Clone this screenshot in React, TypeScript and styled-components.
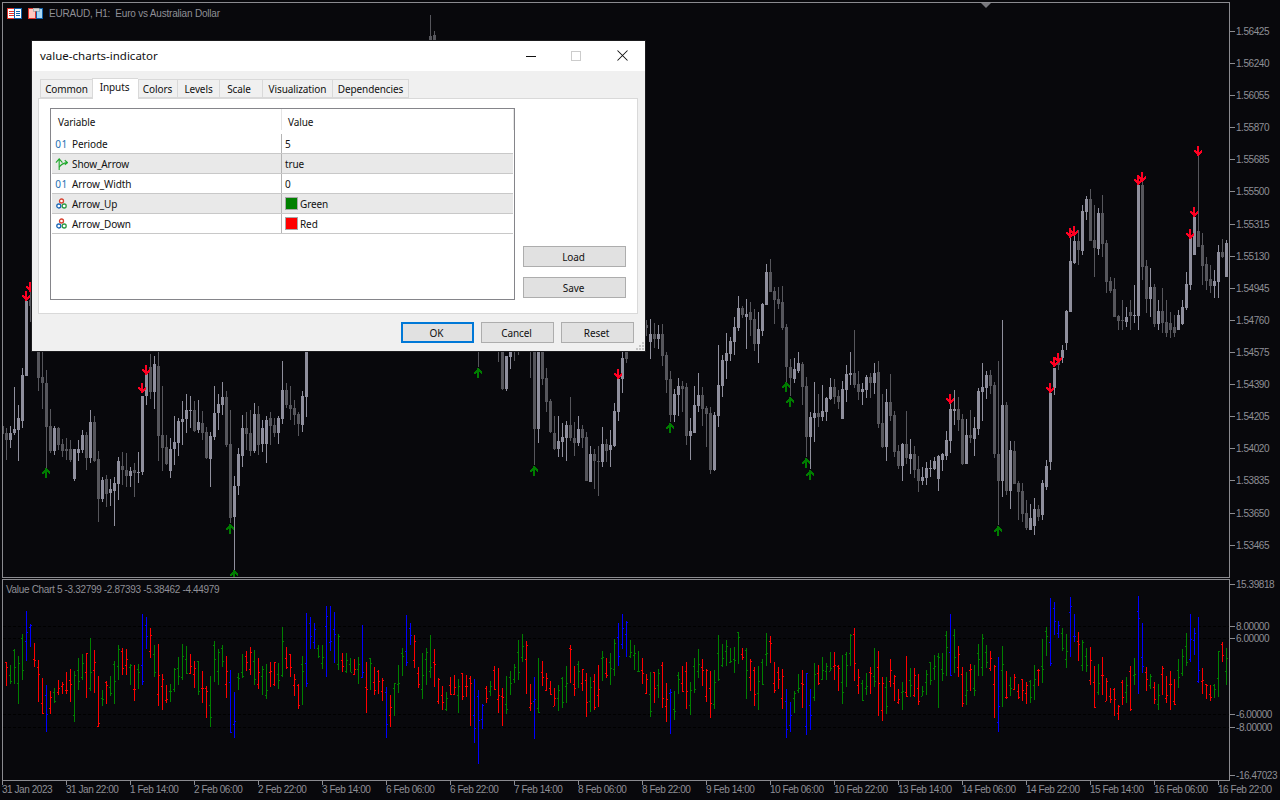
import React from "react";
import styled, { createGlobalStyle } from "styled-components";

const GlobalStyle = createGlobalStyle`
  html, body { margin: 0; padding: 0; background: #08080c; }
  * { box-sizing: border-box; }
`;

type Candle = [number, number, number, number, number];
type CandleSeg = { base: number; x: number; rows: Candle[] };

const candleSegs: CandleSeg[] = [
  { base: 280, x: 2, rows: [
    [438,438,462,462,0],[445,459,480,540,0],[438,459,480,503,1],[322,447,459,465,1],[375,414,450,543,1],[265,285,423,445,1],[50,62,288,288,1],[10,60,78,125,0],[0,0,0,0,0],
    [213,213,294,333,0],[213,291,309,387,0],[270,309,441,565,0],[387,438,513,520,0],[438,444,513,525,1],[441,444,495,510,0],[477,492,513,530,0],[474,507,513,540,0],[480,507,540,545,0],[507,507,597,603,1],[480,507,519,543,1],[450,465,510,520,1],[456,465,534,570,0],[390,426,534,550,1],[408,426,543,545,0],[513,537,657,725,0],[590,600,657,665,1],[585,597,642,680,0],[597,627,639,678,1],[590,609,633,738,1],[531,543,612,660,1],[516,558,570,615,0],[520,570,588,622,0],[560,573,588,620,1],[550,570,579,650,0],[516,576,577,608,1],[348,348,576,585,1],[270,282,348,375,1],[222,262,336,358,0],[228,252,336,388,1],[213,258,468,543,0],[318,465,504,573,0],[465,501,552,555,0],[474,507,573,594,1],[408,486,507,555,1],[414,423,489,528,1],[363,417,426,495,1],[342,390,417,460,1],[348,390,392,445,1],[362,390,453,455,0],[360,426,450,460,1],[393,429,459,480,0],[440,456,535,537,0],[456,468,537,620,1],[318,399,471,480,1],[342,372,399,450,1],[306,351,375,405,1],[333,351,495,500,0],[390,492,714,730,0],[588,618,711,870,1],[505,522,618,645,1],[405,444,528,560,1],[396,444,462,510,0],[390,459,513,528,0],[370,402,513,520,1],[378,402,495,525,0],[420,444,492,515,1],[408,420,492,548,1],[396,414,438,495,0],[415,435,459,470,0],[408,414,459,493,1],[243,330,417,432,1],[310,330,375,385,0],[318,375,387,420,0],[360,384,405,435,0],[396,402,432,467,0],[333,348,435,455,1],[213,213,351,410,1],
  ]},
  { base: 0, x: 430, rows: [[45,108,135,135,0],[93,105,135,135,0]] },
  { base: 340, x: 478, rows: [[0,0,30,80,0]] },
  { base: 340, x: 498, rows: [
    [0,0,30,65,0],[0,0,148,150,0],[48,48,148,153,1],[0,0,50,87,1],[0,0,30,63,0],[0,0,30,45,0],
  ]},
  { base: 340, x: 530, rows: [
    [0,0,30,113,0],[0,0,267,375,0],[0,0,267,308,1],[0,0,117,135,0],[84,114,186,215,0],[178,183,277,278,0],[228,279,327,330,0],[228,303,327,350,1],[249,291,306,350,1],[243,255,294,362,1],[171,255,294,303,0],[246,294,309,348,0],[228,267,309,318,1],[255,267,294,324,0],[276,291,423,424,0],[318,342,426,427,1],[327,342,363,447,0],[318,363,364,468,0],[261,312,366,381,1],[297,312,333,366,0],[270,315,330,381,1],[189,213,318,321,1],[87,117,216,243,1],[35,54,117,159,1],[30,36,57,69,0],
  ]},
  { base: 250, x: 646, rows: [
    [210,225,234,258,0],[207,252,276,327,1],[219,252,267,295,0],[225,252,267,297,1],[222,252,318,348,0],[306,315,390,430,0],[363,387,495,516,0],[417,432,495,516,1],[384,408,435,498,1],[393,408,417,486,0],[399,411,558,585,0],[504,543,558,630,1],[408,465,549,550,1],[369,435,468,486,1],[411,435,477,528,0],[468,474,492,591,0],[471,489,660,672,0],[486,495,660,663,1],[285,405,498,531,1],[315,330,408,441,1],[249,309,333,387,1],[261,273,312,333,1],[201,231,276,315,1],[138,174,234,243,1],[168,174,195,204,0],[147,192,201,297,1],[156,186,210,258,0],[177,207,282,303,0],[186,237,282,339,1],[159,162,243,258,1],[42,66,165,165,1],[27,66,126,126,0],[111,123,150,222,0],[111,147,162,177,0],[108,156,234,240,0],[222,231,351,396,0],[327,351,384,438,0],[324,357,387,400,1],[306,339,363,369,1],[336,342,411,465,0],[381,408,561,620,0],[486,501,561,657,1],[396,489,504,576,1],[432,489,501,531,0],[405,483,501,513,1],[441,444,486,513,1],[384,411,447,450,1],[387,411,441,462,0],[420,438,456,477,0],[393,417,507,507,1],[345,372,420,456,1],[306,369,375,405,1],[240,369,405,414,0],[363,402,426,450,0],[399,417,426,465,1],[375,381,420,444,1],[369,381,399,444,0],[339,369,399,432,1],[333,366,522,534,0],[432,519,591,594,0],[417,456,591,633,1],[372,456,498,513,0],[484,495,606,621,0],[585,603,648,657,0],[579,582,648,693,1],[483,582,624,642,0],[567,612,627,672,1],[588,612,660,684,0],[618,657,693,726,0],[651,681,693,705,1],[636,654,684,705,1],[630,654,656,681,1],[621,633,657,660,1],[615,618,687,723,1],[609,612,630,663,1],[543,570,618,630,1],[462,477,573,609,1],[420,477,483,525,1],[441,477,510,543,0],[492,507,642,645,0],[507,555,642,642,1],[480,555,564,579,0],[501,534,567,618,1],[414,423,537,555,1],[339,411,426,513,1],[363,375,414,447,1],[360,375,408,432,0],[396,405,612,624,0],[333,612,693,825,0],[210,465,693,741,1],[456,465,723,735,0],[573,600,723,777,1],[573,603,702,702,0],[693,699,726,810,0],[699,723,792,816,0],[750,789,834,840,0],[762,804,840,840,1],[744,777,828,855,1],[765,777,801,813,0],
  ]},
  { base: 0, x: 1042, rows: [
    [1440,1449,1545,1560,1],[1380,1398,1461,1470,1],[1179,1179,1386,1410,1],[1104,1104,1164,1185,1],[1068,1074,1095,1110,0],[1035,1050,1074,1090,1],
  ]},
  { base: 130, x: 1066, rows: [
    [540,543,640,660,1],[320,393,546,546,1],[315,333,399,402,1],[300,333,360,405,0],[225,243,363,375,1],[198,207,246,270,1],[177,207,333,333,0],[225,330,354,441,0],[234,249,357,375,1],[195,249,342,382,0],[330,339,456,490,0],[440,453,483,490,0],[443,477,561,561,0],[555,558,573,600,0],[510,570,572,600,0],[530,561,576,590,1],[510,546,558,600,0],[465,555,557,580,1],[160,165,558,600,1],[150,165,411,450,0],[390,408,507,550,0],[415,471,507,560,1],[462,471,582,590,0],[510,543,582,600,1],[474,543,579,610,0],[510,576,610,620,0],[545,578,600,625,0],[555,590,610,620,0],[540,555,600,600,1],[510,531,582,585,1],[427,462,534,540,1],[320,321,465,480,1],[258,260,375,375,1],[75,303,351,351,0],[310,345,408,465,0],[380,402,453,480,0],[405,447,468,490,0],[420,453,468,505,1],[345,366,456,505,1],[327,366,381,385,0],[330,339,441,441,1],
  ]},
];

type ValueSeg = { base: number; x: number; rows: string };
const valueSegs: ValueSeg[] = [
  { base: 570, x: 6, rows: "r276-348 g285-342 g236-342 g258-402 g192-330 b123-273 b162-231 r219-291 r270-396 r324-432 b346-485 r363-432 g354-400 r330-375 r336-372 r306-372 r297-396 g303-456 g264-360 g252-330 r249-384 g204-363 r240-369 r318-471 g360-408 r333-402 g318-378 g272-402 g225-330 r234-315 r237-315 g282-345 r285-393 g282-357 b132-345 b141-237 r174-264 g225-321 r222-408 r312-420 r345-399 g342-396 g294-366 g261-345 g222-330 g228-312 r252-312 r273-354 g273-375 r303-400 r348-444 g318-471 g213-336 g237-345 g225-291 r258-384 b300-490 b366-503 g309-360 g252-324 r243-303 r231-315 g240-345 r264-357 g288-375 g282-387 r276-351 r276-348 g279-357 g171-321 r231-297 r252-321 r312-378 r342-417" },
  { base: 580, x: 302, rows: "g228-375 b99-321 b111-207 b129-207 g195-234 g195-267 b78-291 b78-213 b96-249 g162-270 r219-276 g219-279 g234-276 r237-285 g231-312 b135-294 r246-399 g234-330 r261-345 r270-342 r294-363 b321-474 r345-441 g309-408 g255-339 g204-288 b105-258 b129-195 r165-264 r261-324 g219-357 g204-315 g165-294 r207-321 r294-372 r318-390 g336-393 r291-345 r285-345 g297-399 r279-360 r285-351 r288-438 b297-489 b330-552 b372-447 r318-369 g303-348 r258-330 r264-399 r324-438 g288-402 g273-345 g252-309 g180-300 g162-246 r183-342 r312-393 b291-477 g234-399 r243-318 r279-333 r303-345 r324-378 g315-393 g291-384 g258-369 r195-309 r258-348 g243-324 r267-333 r279-411 g291-396 r282-390 r255-381 g213-303 r234-294 g219-315 g177-288 b129-258 b102-207 b123-231 g180-234 g195-270 g213-276 r234-312 r282-342 g276-411 r276-369 g267-354 r246-384 r309-426 b327-462 g333-420 g276-342 r258-336 r246-387 g306-405 g234-339 g207-294" },
  { base: 580, x: 702, rows: "r237-318 r267-366 r273-414 g270-387 g165-303 g192-261 g180-258 g204-249 g201-279 g156-252 r204-240 g204-357 r237-333 r261-378 g258-390 g237-315 g159-258 r168-249 r246-339 r261-327 r267-387 b327-474 b366-456 g333-399 g282-339 r270-384 b279-465 b327-450 g249-363 r255-315 g231-300 g249-300 g216-273 r216-300 r255-333 g225-372 g216-321 g162-258 r144-303 r267-342 g300-363 g279-345 r261-342 g204-321 r213-408 r291-423 g291-402 r237-321 r285-363 r327-372 g306-390 r228-351 g264-351 r264-351 r282-375 g318-348 g270-345 g246-315 g225-300 g219-384 g219-303 g153-288 b102-288 g147-279 r198-291 r261-381 g276-375 r252-333 g255-348 g192-288 g162-288 g195-264 r213-273 r255-414 b231-456 g198-381 r273-357 g291-348 r282-330 r312-357 r297-363 r306-372 g300-369 g255-360 r267-318 g177-309 g141-228 b54-258 b66-165 b123-174 g144-213 g162-264 b51-231 b102-186 r156-243 g180-273 g204-276 r201-315 r258-384 g252-345" },
  { base: 560, x: 1102, rows: "r291-405 r354-423 r384-430 r384-468 r435-480 r360-435 g351-429 r318-453 g294-375 b108-402 b189-339 r321-393 g342-387 r366-432 g372-450 r318-405 r348-429 r333-450 r357-435 g297-384 g267-348 g219-318 b162-306 b204-285 b171-369 r324-402 r372-417 r375-423 g372-414 g273-411 r246-306 g264-375" },
];

const redArrows: [number, number][] = [[26,296],[30,287],[146,370],[142,388],[618,374],[950,399],[1050,388],[1054,362],[1058,358],[1070,233],[1074,231],[1138,180],[1142,177],[1190,234],[1194,212],[1198,151]];
const greenArrows: [number, number][] = [[46,473],[230,529],[234,575],[478,373],[482,345],[534,471],[670,428],[786,387],[790,402],[806,463],[810,475],[998,531]];

const prices = ["1.56425","1.56240","1.56055","1.55870","1.55685","1.55500","1.55315","1.55130","1.54945","1.54760","1.54575","1.54390","1.54205","1.54020","1.53835","1.53650","1.53465"];
const times = ["31 Jan 2023","31 Jan 22:00","1 Feb 14:00","2 Feb 06:00","2 Feb 22:00","3 Feb 14:00","6 Feb 06:00","6 Feb 22:00","7 Feb 14:00","8 Feb 06:00","8 Feb 22:00","9 Feb 14:00","10 Feb 06:00","10 Feb 22:00","13 Feb 14:00","14 Feb 06:00","14 Feb 22:00","15 Feb 14:00","16 Feb 06:00","16 Feb 22:00"];
const valueLabels: [string, number][] = [["15.39818",5],["8.00000",47],["6.00000",59],["-6.00000",135],["-8.00000",148],["-16.47023",196]];
const levels = [626, 638, 714, 727];

const CHART_FONT = `"Liberation Sans", Arial, sans-serif`;
const UI_FONT = `"Noto Sans", "Open Sans", sans-serif`;
const AXIS_LINE = "#8b8b90";
const AXIS_TEXT = "#8f8f96";

const Page = styled.div`
  width: 1280px;
  height: 800px;
  padding: 2px 0 0 2px;
  overflow: hidden;
  position: relative;
  background: #08080c;
  font-family: ${CHART_FONT};
`;
const PaneRow = styled.div<{ $h: number; $mt?: number }>`
  display: flex;
  height: ${(p) => p.$h}px;
  margin-top: ${(p) => p.$mt ?? 0}px;
`;
const Frame = styled.div`
  width: 1228px;
  border: 1px solid ${AXIS_LINE};
  position: relative;
  overflow: hidden;
`;
const Plot = styled.svg`
  display: block;
  width: 1226px;
  height: 100%;
`;
const ChartHeader = styled.div`
  position: absolute;
  left: 4px;
  top: 4px;
  height: 13px;
  display: flex;
  align-items: center;
  gap: 5px;
`;
const ChartTitle = styled.span`
  font-size: 10px;
  letter-spacing: -0.2px;
  color: ${AXIS_TEXT};
  white-space: pre;
`;
const ShiftMark = styled.div`
  position: absolute;
  left: 978px;
  top: 0;
  width: 0;
  height: 0;
  border-left: 5px solid transparent;
  border-right: 5px solid transparent;
  border-top: 5px solid #77777c;
`;
const IndicatorLabel = styled.div`
  position: absolute;
  left: 3px;
  top: 3px;
  font-size: 10px;
  line-height: 13px;
  letter-spacing: -0.33px;
  color: ${AXIS_TEXT};
  white-space: pre;
`;
const PriceAxis = styled.div`
  padding-top: 13.4px;
  display: flex;
  flex-direction: column;
`;
const PriceRow = styled.div`
  height: 32.12px;
  display: flex;
  align-items: center;
  gap: 1px;
  font-size: 10px;
  letter-spacing: -0.45px;
  color: ${AXIS_TEXT};
  &::before {
    content: "";
    width: 5px;
    height: 1px;
    background: ${AXIS_LINE};
  }
`;
const ValueAxis = styled.div`
  position: relative;
  width: 50px;
`;
const ValueRow = styled.div<{ $y: number }>`
  position: absolute;
  left: 0;
  top: ${(p) => p.$y - 7}px;
  height: 14px;
  display: flex;
  align-items: center;
  gap: 1px;
  font-size: 10px;
  letter-spacing: -0.45px;
  color: ${AXIS_TEXT};
  &::before {
    content: "";
    width: 5px;
    height: 1px;
    background: ${AXIS_LINE};
  }
`;
const TimeAxis = styled.div`
  display: flex;
`;
const TimeCell = styled.div`
  flex: 0 0 64px;
  height: 18px;
  position: relative;
  font-size: 10px;
  letter-spacing: -0.45px;
  line-height: 12px;
  padding-top: 3px;
  color: ${AXIS_TEXT};
  white-space: nowrap;
  &::before {
    content: "";
    position: absolute;
    left: 0;
    top: 0;
    width: 1px;
    height: 4px;
    background: ${AXIS_LINE};
  }
`;

const Dialog = styled.div`
  position: absolute;
  left: 31px;
  top: 40px;
  width: 615px;
  height: 312px;
  border: 1px solid #1b1b1e;
  background: #f0f0f0;
  display: flex;
  flex-direction: column;
  font-family: ${UI_FONT};
  font-size: 10px;
  letter-spacing: -0.1px;
  color: #111;
`;
const TitleBar = styled.div`
  height: 30px;
  background: #fff;
  display: flex;
  align-items: center;
  padding: 0 0 1px 8px;
  font-size: 11.5px;
  letter-spacing: 0;
  flex: none;
`;
const TitleText = styled.span`
  flex: 1;
`;
const WinButton = styled.span<{ $mr: number }>`
  display: flex;
  margin-right: ${(p) => p.$mr}px;
`;
const TabBar = styled.div`
  display: flex;
  align-items: flex-end;
  height: 27px;
  padding-left: 8px;
  flex: none;
  position: relative;
  z-index: 1;
`;
const Tab = styled.div<{ $w: number; $pr: number; $active?: boolean }>`
  width: ${(p) => p.$w}px;
  height: ${(p) => (p.$active ? 21 : 19)}px;
  margin-bottom: ${(p) => (p.$active ? -1 : 0)}px;
  background: ${(p) => (p.$active ? "#fff" : "#f0f0f0")};
  border: 1px solid #d9d9d9;
  border-bottom: ${(p) => (p.$active ? "none" : "1px solid #d9d9d9")};
  border-right: none;
  display: flex;
  align-items: center;
  justify-content: center;
  line-height: 15px;
  padding-right: ${(p) => p.$pr}px;
  padding-bottom: ${(p) => (p.$active ? 3 : 0)}px;
  padding-top: ${(p) => (p.$active ? 0 : 1)}px;
  &:last-child {
    border-right: 1px solid #d9d9d9;
  }
`;
const TabPanel = styled.div`
  margin-left: 6px;
  width: 600px;
  height: 216px;
  background: #fff;
  border: 1px solid #d9d9d9;
  padding: 9px 11px;
  display: flex;
  gap: 8px;
  flex: none;
`;
const ListBox = styled.div`
  width: 465px;
  height: 192px;
  border: 1px solid #85858a;
  padding: 0 1px;
  background: #fff;
  flex: none;
`;
const ListHeader = styled.div`
  height: 25px;
  display: grid;
  grid-template-columns: 230px 232px;
`;
const HeaderCell = styled.div<{ $pl: number }>`
  display: flex;
  align-items: center;
  padding-left: ${(p) => p.$pl}px;
  border-right: 1px solid #e5e5e5;
  margin-bottom: 4px;
  padding-top: 4px;
`;
const Row = styled.div<{ $shade?: boolean }>`
  height: 20px;
  display: grid;
  grid-template-columns: 230px 232px;
  background: ${(p) => (p.$shade ? "#e9e9e9" : "#fff")};
  border-bottom: 1px solid #c8c8c8;
`;
const NameCell = styled.div`
  display: flex;
  align-items: center;
  gap: 4px;
  padding-left: 3px;
  border-right: 1px solid #b4b4b4;
`;
const ValueCell = styled.div`
  display: flex;
  align-items: center;
  gap: 2px;
  padding-left: 3px;
`;
const IconSlot = styled.span`
  width: 13px;
  height: 14px;
  display: flex;
  align-items: center;
  justify-content: center;
  flex: none;
`;
const IntIcon = styled.span`
  font-size: 10px;
  line-height: 14px;
  color: #1c6fb3;
  letter-spacing: 0.5px;
`;
const Swatch = styled.span<{ $color: string }>`
  width: 13px;
  height: 13px;
  background: ${(p) => p.$color};
  border: 1px solid #a8a8a8;
  flex: none;
`;
const SideColumn = styled.div`
  width: 103px;
  height: 192px;
  padding-bottom: 2px;
  display: flex;
  flex-direction: column;
  justify-content: flex-end;
  gap: 10px;
`;
const Button = styled.div<{ $primary?: boolean }>`
  height: 21px;
  width: 100%;
  background: #e1e1e1;
  border: ${(p) => (p.$primary ? "2px solid #0078d7" : "1px solid #adadad")};
  display: flex;
  align-items: center;
  justify-content: center;
  line-height: 15px;
  padding: 1px 2px 0 0;
`;
const Footer = styled.div`
  display: flex;
  justify-content: flex-end;
  gap: 7px;
  padding: 8px 11px 0 0;
`;
const FooterButton = styled.div`
  width: 73px;
`;
const Grip = styled.svg`
  position: absolute;
  right: 1px;
  bottom: 1px;
`;

const candleFill = (l: number) => (l ? "#8f8f9d" : "#56565c");
const valueFill: Record<string, string> = { r: "#ff0000", g: "#008000", b: "#0000ff" };

function CandleMarks() {
  const out: React.ReactNode[] = [];
  candleSegs.forEach((seg, s) => {
    seg.rows.forEach((r, i) => {
      const [hi, top, bot, lo, l] = r;
      if (hi === 0 && lo === 0) return;
      const x = seg.x + i * 4;
      const y = (v: number) => Math.round(seg.base + v / 3);
      out.push(<rect key={`w${s}-${i}`} x={x} y={y(hi)} width={1} height={Math.max(1, y(lo) - y(hi))} fill={candleFill(l)} />);
      out.push(<rect key={`b${s}-${i}`} x={x - 1} y={y(top)} width={3} height={Math.max(1, y(bot) - y(top))} fill={candleFill(l)} />);
    });
  });
  return <>{out}</>;
}

function Arrow({ x, y, color, down }: { x: number; y: number; color: string; down?: boolean }) {
  const t = down ? `translate(${x} ${y})` : `translate(${x} ${y}) scale(1 -1)`;
  return (
    <path
      transform={t}
      fill={color}
      d="M-1 -5H1V1L3 -1H4V1L1 4V5H-1V4L-4 1V-1H-3L-1 1Z"
    />
  );
}

function ValueBars() {
  const out: React.ReactNode[] = [];
  valueSegs.forEach((seg, s) => {
    seg.rows.split(" ").forEach((tok, i) => {
      const c = tok[0];
      const [a, b] = tok.slice(1).split("-").map(Number);
      const x = seg.x + i * 4;
      const top = Math.round(seg.base + a / 3);
      const bot = Math.round(seg.base + b / 3);
      const h = bot - top;
      const f1 = ((i * 37 + s * 11) % 71) / 71;
      const f2 = ((i * 53 + s * 7 + 19) % 83) / 83;
      out.push(<rect key={`v${s}-${i}`} x={x} y={top} width={1} height={h} fill={valueFill[c]} />);
      out.push(<rect key={`o${s}-${i}`} x={x - 1} y={top + Math.round(f1 * h)} width={1} height={1} fill={valueFill[c]} />);
      out.push(<rect key={`c${s}-${i}`} x={x + 1} y={top + Math.round(f2 * h)} width={1} height={1} fill={valueFill[c]} />);
    });
  });
  return <>{out}</>;
}

const TableIcon = () => (
  <svg width="16" height="12" viewBox="0 0 16 12" shapeRendering="crispEdges">
    <rect x="0.5" y="0.5" width="7" height="10" fill="#fff" stroke="#e0332b" />
    <rect x="7.5" y="0.5" width="7" height="10" fill="#fff" stroke="#0f5fa8" />
    <path d="M2 3h5M2 5h5M2 7h5" stroke="#e0332b" />
    <path d="M9 3h4M9 5h4M9 7h4" stroke="#0f5fa8" />
  </svg>
);
const TemplateIcon = () => (
  <svg width="16" height="12" viewBox="0 0 16 12" shapeRendering="crispEdges">
    <path d="M0.5 0.5h5v2h2v8h-7z" fill="#ffc9c0" stroke="#e0332b" />
    <path d="M9.5 2.5h1v-2h4v10h-6v-8z" fill="#a9d8f5" stroke="#0f5fa8" />
    <rect x="5" y="0" width="6" height="3" fill="#d8d8d8" stroke="#8c8c8c" strokeWidth="0.5" />
  </svg>
);
const BoolIcon = () => (
  <svg width="14" height="14" viewBox="0 0 14 14" fill="none" stroke="#1fa82c" strokeWidth="1.2">
    <path d="M4.500 13.500V1.500M1 5.500l3.500-4 3.500 4" />
    <path d="M4.500 10.500C6 8 8.500 6 13 5.500M10.500 3l3 2.500-3 2.500" />
  </svg>
);
const ColorIcon = () => (
  <svg width="11" height="11" viewBox="0 0 11 11" fill="#fff" strokeWidth="1.3">
    <circle cx="5.5" cy="3" r="2" stroke="#d8402f" />
    <circle cx="2.800" cy="8" r="2" stroke="#1a66b5" />
    <circle cx="8.200" cy="8" r="2" stroke="#2e9b46" />
  </svg>
);

const tabs: [string, number, number][] = [["Common",52,0],["Inputs",46,2],["Colors",39,1],["Levels",42,0],["Scale",43,4],["Visualization",70,0],["Dependencies",77,0]];

type Param = { name: string; value: string; icon: "int" | "bool" | "color"; swatch?: string };
const params: Param[] = [
  { name: "Periode", value: "5", icon: "int" },
  { name: "Show_Arrow", value: "true", icon: "bool" },
  { name: "Arrow_Width", value: "0", icon: "int" },
  { name: "Arrow_Up", value: "Green", icon: "color", swatch: "#008000" },
  { name: "Arrow_Down", value: "Red", icon: "color", swatch: "#ff0000" },
];

export default function App() {
  return (
    <Page>
      <GlobalStyle />
      <PaneRow $h={576}>
        <Frame>
          <Plot viewBox="3 3 1226 574" preserveAspectRatio="none" shapeRendering="crispEdges">
            <CandleMarks />
            {redArrows.map(([x, y]) => <Arrow key={`r${x}`} x={x} y={y} color="#ff0022" down />)}
            {greenArrows.map(([x, y]) => <Arrow key={`g${x}`} x={x} y={y} color="#007c00" />)}
          </Plot>
          <ChartHeader>
            <TableIcon />
            <TemplateIcon />
            <ChartTitle>EURAUD, H1:  Euro vs Australian Dollar</ChartTitle>
          </ChartHeader>
          <ShiftMark />
        </Frame>
        <PriceAxis>
          {prices.map((p) => <PriceRow key={p}>{p}</PriceRow>)}
        </PriceAxis>
      </PaneRow>
      <PaneRow $h={202} $mt={1}>
        <Frame>
          <Plot viewBox="3 580 1226 200" preserveAspectRatio="none" shapeRendering="crispEdges">
            {levels.map((y) => <line key={y} x1="3" x2="1229" y1={y + 0.5} y2={y + 0.5} stroke="#000" strokeDasharray="3 2" />)}
            <ValueBars />
          </Plot>
          <IndicatorLabel>Value Chart 5 -3.32799 -2.87393 -5.38462 -4.44979</IndicatorLabel>
        </Frame>
        <ValueAxis>
          {valueLabels.map(([t, y]) => <ValueRow key={t} $y={y}>{t}</ValueRow>)}
        </ValueAxis>
      </PaneRow>
      <TimeAxis>
        {times.map((t) => <TimeCell key={t}>{t}</TimeCell>)}
      </TimeAxis>

      <Dialog>
        <TitleBar>
          <TitleText>value-charts-indicator</TitleText>
          <WinButton $mr={35}>
            <svg width="10" height="10" viewBox="0 0 10 10" shapeRendering="crispEdges"><path d="M0 5.500h10" stroke="#111" /></svg>
          </WinButton>
          <WinButton $mr={36}>
            <svg width="10" height="10" viewBox="0 0 10 10" shapeRendering="crispEdges"><rect x="0.500" y="0.500" width="9" height="9" fill="none" stroke="#ccc" /></svg>
          </WinButton>
          <WinButton $mr={17}>
            <svg width="11" height="11" viewBox="0 0 11 11"><path d="M0.500 0.500l10 10M10.500 0.500l-10 10" stroke="#111" strokeWidth="1.050" /></svg>
          </WinButton>
        </TitleBar>
        <TabBar>
          {tabs.map(([t, w, pr]) => <Tab key={t} $w={w} $pr={pr} $active={t === "Inputs"}>{t}</Tab>)}
        </TabBar>
        <TabPanel>
          <ListBox>
            <ListHeader>
              <HeaderCell $pl={6}>Variable</HeaderCell>
              <HeaderCell $pl={6}>Value</HeaderCell>
            </ListHeader>
            {params.map((p, i) => (
              <Row key={p.name} $shade={i % 2 === 1}>
                <NameCell>
                  <IconSlot>
                    {p.icon === "int" && <IntIcon>01</IntIcon>}
                    {p.icon === "bool" && <BoolIcon />}
                    {p.icon === "color" && <ColorIcon />}
                  </IconSlot>
                  {p.name}
                </NameCell>
                <ValueCell>
                  {p.swatch && <Swatch $color={p.swatch} />}
                  {p.value}
                </ValueCell>
              </Row>
            ))}
          </ListBox>
          <SideColumn>
            <Button>Load</Button>
            <Button>Save</Button>
          </SideColumn>
        </TabPanel>
        <Footer>
          <FooterButton><Button $primary>OK</Button></FooterButton>
          <FooterButton><Button>Cancel</Button></FooterButton>
          <FooterButton><Button>Reset</Button></FooterButton>
        </Footer>
        <Grip width="8" height="8" viewBox="0 0 8 8" fill="#c4c4c4" shapeRendering="crispEdges">
          <rect x="6" y="0" width="2" height="2" />
          <rect x="3" y="3" width="2" height="2" />
          <rect x="6" y="3" width="2" height="2" />
          <rect x="0" y="6" width="2" height="2" />
          <rect x="3" y="6" width="2" height="2" />
          <rect x="6" y="6" width="2" height="2" />
        </Grip>
      </Dialog>
    </Page>
  );
}
